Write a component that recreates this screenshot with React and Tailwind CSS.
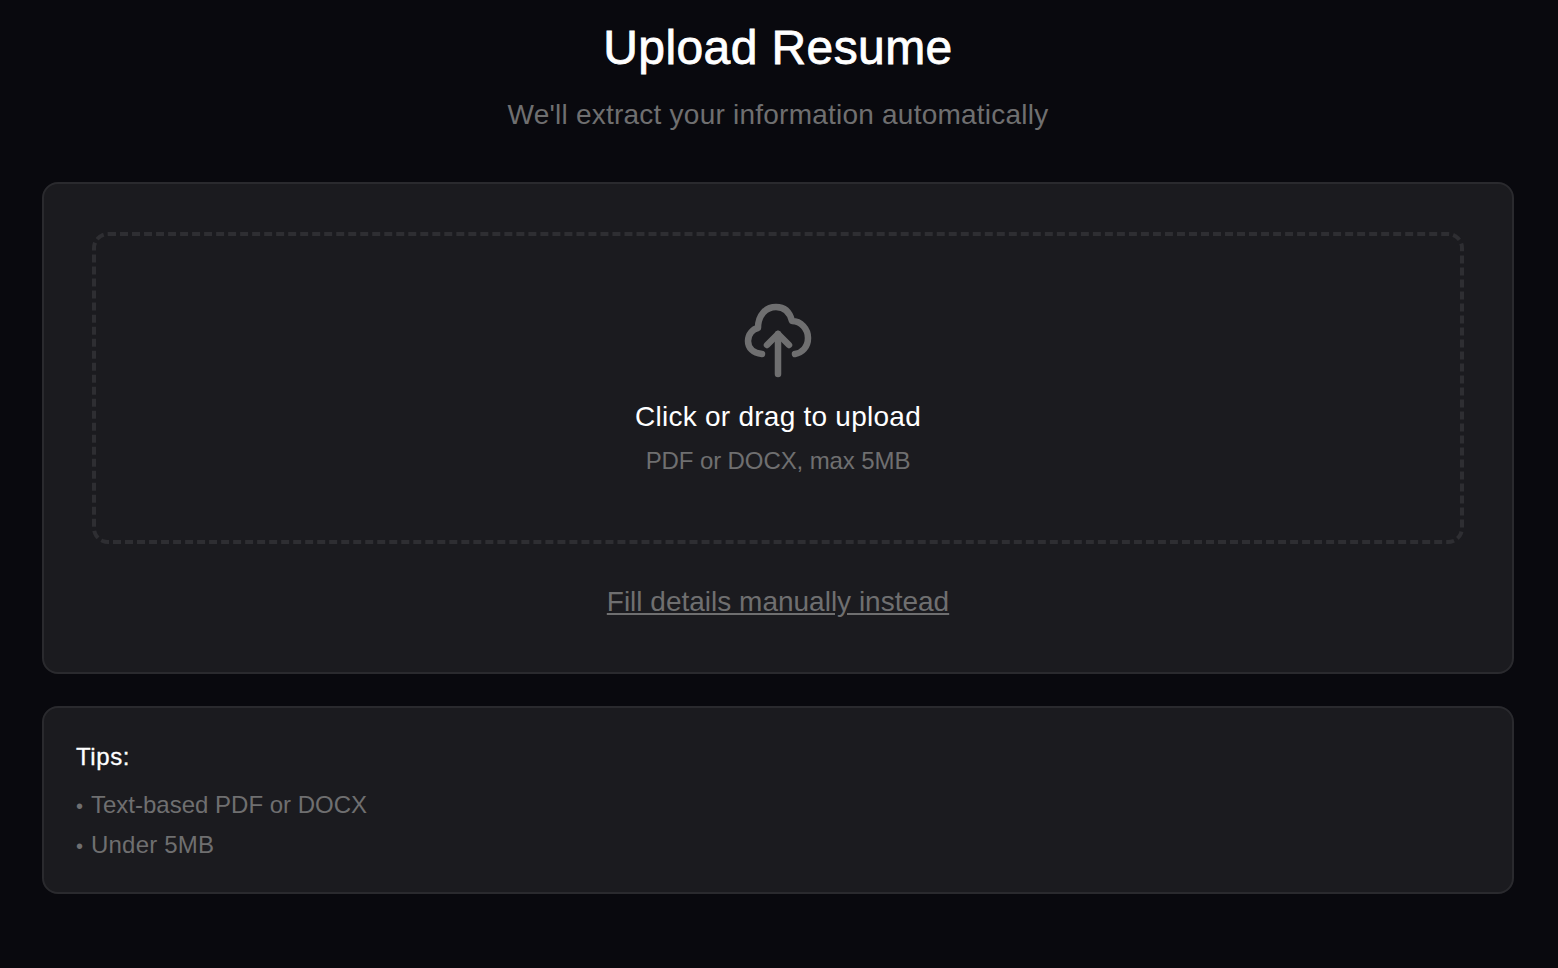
import React from 'react';

const UploadIcon = () => (
  <svg viewBox="0 0 72 80" className="w-[72px] h-[80px]" fill="none" stroke="#6f6f70" strokeWidth="6.5" strokeLinecap="round" strokeLinejoin="round">
    <path d="M20 53C11 52 6 47 6 40C6 33 11 28 16 27C16 14 24 6 34 6C43 6 48 12 50 20C59 20 66 28 66 37C66 46 60 52 53 53" />
    <path d="M36 73V33" />
    <path d="M25 44L36 33L47 44" />
  </svg>
);

export default function App() {
  return (
    <div className="min-h-[968px] bg-[#09090e] pl-[42px] pr-[44px] pt-[20px] font-['Liberation_Sans',Arial,sans-serif]">
      {/* Header */}
      <div className="text-center mb-[49px]">
        <h1 className="text-[48px] leading-[56px] text-white font-normal tracking-[0.4px] [-webkit-text-stroke:0.8px_white]">Upload Resume</h1>
        <p className="mt-[21px] text-[28px] leading-[36px] text-[#6f6f70] tracking-[0.23px]">We'll extract your information automatically</p>
      </div>

      {/* Upload card */}
      <div className="rounded-2xl border-2 border-[#2a2a2e] bg-[#1b1b1f] pt-[48px] px-[48px] pb-[52px] mb-[32px]">
        <div className="h-[312px] rounded-2xl border-4 border-dashed border-[#2e2e32] flex flex-col items-center pt-[65px]">
          <UploadIcon />
          <p className="mt-[18px] text-[28px] leading-[36px] text-white tracking-[0.25px]">Click or drag to upload</p>
          <p className="mt-[8px] text-[24px] leading-[36px] text-[#6f6f70] tracking-[-0.1px]">PDF or DOCX, max 5MB</p>
        </div>
        <div className="mt-[40px] text-center">
          <button className="text-[28px] leading-[36px] text-[#6f6f70] underline">Fill details manually instead</button>
        </div>
      </div>

      {/* Tips */}
      <div className="rounded-2xl border-2 border-[#2a2a2e] bg-[#1b1b1f] px-[32px] pt-[33px] h-[188px]">
        <p className="text-[24px] leading-[32px] text-white mb-[12px] tracking-[0.6px] [-webkit-text-stroke:0.3px_white]">Tips:</p>
        <p className="text-[24px] leading-[40px] text-[#6f6f70]"><span className="inline-block w-[15px] text-[20px] leading-none">•</span>Text-based PDF or DOCX</p>
        <p className="text-[24px] leading-[40px] text-[#6f6f70] tracking-[0.2px]"><span className="inline-block w-[15px] text-[20px] leading-none">•</span>Under 5MB</p>
      </div>
    </div>
  );
}
